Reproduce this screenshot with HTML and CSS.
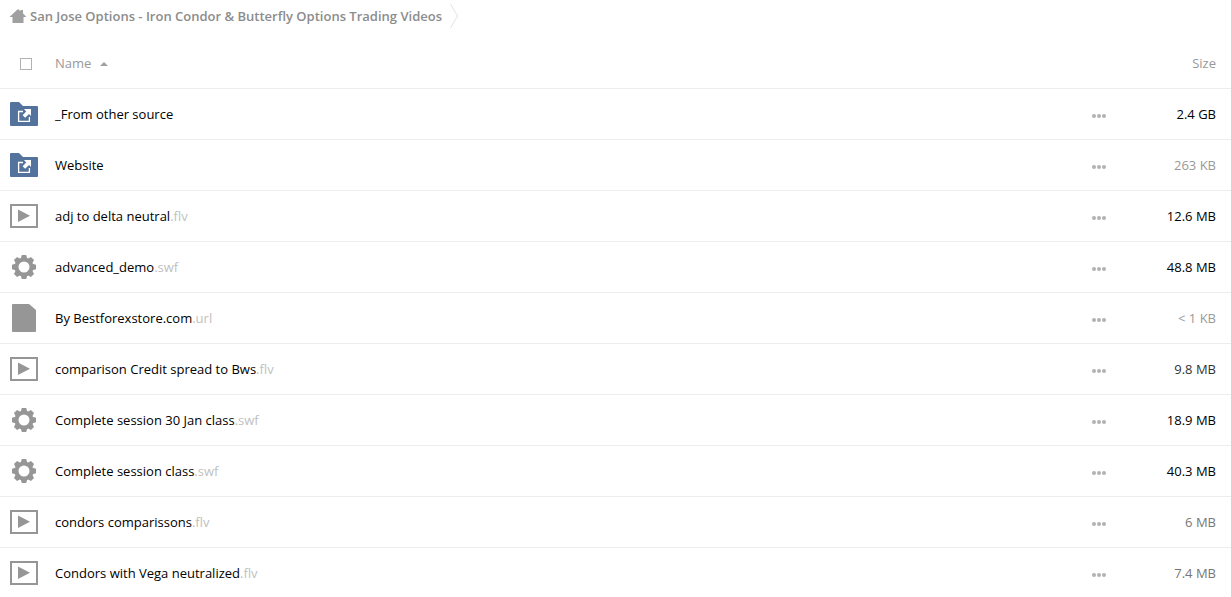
FILE: index.html
```html
<!DOCTYPE html>
<html lang="en">
<head>
  <meta charset="UTF-8">
  <meta name="viewport" content="width=device-width, initial-scale=1.0">
  <title>San Jose Options - Iron Condor &amp; Butterfly Options Trading Videos</title>
  <link rel="stylesheet" href="styles.css">
</head>
<body>
  <!-- Shared icons -->
  <svg class="sprite" aria-hidden="true">
    <symbol id="icon-folder" viewBox="0 0 28 24">
      <path fill="#54739c" d="M0 1a1 1 0 0 1 1-1h8l4 4h14a1 1 0 0 1 1 1v18a1 1 0 0 1-1 1H1a1 1 0 0 1-1-1z"/>
      <path fill="none" stroke="#fff" stroke-width="1.3" d="M13 9.500H8.600v9.900h10.800V15"/>
      <path fill="#fff" d="M14 7h7v7l-2-2-3.800 3.800-2.600-2.600 3.600-3.800z"/>
    </symbol>
    <symbol id="icon-video" viewBox="0 0 28 24">
      <rect x="1" y="1" width="26" height="22" fill="#fff" stroke="#969696" stroke-width="2"/>
      <path fill="#969696" d="M8 5.500l12 6.300-12 6.200z"/>
    </symbol>
    <symbol id="icon-gear" viewBox="-12 -12 24 24">
      <circle r="7.500" fill="none" stroke="#969696" stroke-width="4"/>
      <g fill="#969696">
        <path id="teeth" d="M-3.200-8.500L-2.200-12h4.400l1 3.500zM-3.200 8.500L-2.200 12h4.400l1-3.500zM-8.500-3.200L-12-2.200v4.400l3.500 1zM8.500-3.200L12-2.200v4.400l-3.500 1z"/>
        <use href="#teeth" transform="rotate(45)"/>
      </g>
    </symbol>
    <symbol id="icon-file" viewBox="0 0 24 28">
      <path fill="#969696" d="M1 0h16l7 6v21a1 1 0 0 1-1 1H1a1 1 0 0 1-1-1V1a1 1 0 0 1 1-1z"/>
    </symbol>
    <symbol id="icon-dots" viewBox="0 0 14 4">
      <g fill="#b2b2b2"><circle cx="2" cy="2" r="2"/><circle cx="7" cy="2" r="2"/><circle cx="12" cy="2" r="2"/></g>
    </symbol>
  </svg>

  <nav class="breadcrumbs" aria-label="Breadcrumb">
    <a class="crumb" href="#">
      <svg class="home" viewBox="0 0 16 14" aria-hidden="true">
        <path fill="#a0a0a0" d="M8 0l2.500 2.300V1H13v3.600l3 2.900V8h-2.500v6h-11V8H0v-.5z"/>
      </svg>
      San Jose Options - Iron Condor &amp; Butterfly Options Trading Videos
    </a>
    <svg class="chevron" viewBox="0 0 8 24" aria-hidden="true">
      <path fill="none" stroke="#e2e2e2" d="M.5 0l7 12-7 12"/>
    </svg>
  </nav>

  <table class="files">
    <thead>
      <tr>
        <th class="col-icon"><input class="check" type="checkbox" aria-label="Select all"></th>
        <th class="col-name">
          <button class="sort" type="button">Name
            <svg class="arrow" viewBox="0 0 8 4" aria-hidden="true"><path fill="#a0a0a0" d="M0 4l4-4 4 4z"/></svg>
          </button>
        </th>
        <th class="col-menu"></th>
        <th class="col-size"><button class="sort" type="button">Size</button></th>
      </tr>
    </thead>
    <tbody>
      <tr>
        <td class="col-icon"><svg class="icon"><use href="#icon-folder"/></svg></td>
        <td class="col-name"><a href="#">_From other source</a></td>
        <td class="col-menu"><button class="menu" type="button" aria-label="More"><svg class="dots"><use href="#icon-dots"/></svg></button></td>
        <td class="col-size">2.4 GB</td>
      </tr>
      <tr>
        <td class="col-icon"><svg class="icon"><use href="#icon-folder"/></svg></td>
        <td class="col-name"><a href="#">Website</a></td>
        <td class="col-menu"><button class="menu" type="button" aria-label="More"><svg class="dots"><use href="#icon-dots"/></svg></button></td>
        <td class="col-size size-tiny">263 KB</td>
      </tr>
      <tr>
        <td class="col-icon"><svg class="icon"><use href="#icon-video"/></svg></td>
        <td class="col-name"><a href="#">adj to delta neutral<span class="ext">.flv</span></a></td>
        <td class="col-menu"><button class="menu" type="button" aria-label="More"><svg class="dots"><use href="#icon-dots"/></svg></button></td>
        <td class="col-size">12.6 MB</td>
      </tr>
      <tr>
        <td class="col-icon"><svg class="icon"><use href="#icon-gear"/></svg></td>
        <td class="col-name"><a href="#">advanced_demo<span class="ext">.swf</span></a></td>
        <td class="col-menu"><button class="menu" type="button" aria-label="More"><svg class="dots"><use href="#icon-dots"/></svg></button></td>
        <td class="col-size">48.8 MB</td>
      </tr>
      <tr>
        <td class="col-icon"><svg class="icon icon-tall"><use href="#icon-file"/></svg></td>
        <td class="col-name"><a href="#">By Bestforexstore.com<span class="ext">.url</span></a></td>
        <td class="col-menu"><button class="menu" type="button" aria-label="More"><svg class="dots"><use href="#icon-dots"/></svg></button></td>
        <td class="col-size size-tiny">&lt; 1 KB</td>
      </tr>
      <tr>
        <td class="col-icon"><svg class="icon"><use href="#icon-video"/></svg></td>
        <td class="col-name"><a href="#">comparison Credit spread to Bws<span class="ext">.flv</span></a></td>
        <td class="col-menu"><button class="menu" type="button" aria-label="More"><svg class="dots"><use href="#icon-dots"/></svg></button></td>
        <td class="col-size size-medium">9.8 MB</td>
      </tr>
      <tr>
        <td class="col-icon"><svg class="icon"><use href="#icon-gear"/></svg></td>
        <td class="col-name"><a href="#">Complete session 30 Jan class<span class="ext">.swf</span></a></td>
        <td class="col-menu"><button class="menu" type="button" aria-label="More"><svg class="dots"><use href="#icon-dots"/></svg></button></td>
        <td class="col-size">18.9 MB</td>
      </tr>
      <tr>
        <td class="col-icon"><svg class="icon"><use href="#icon-gear"/></svg></td>
        <td class="col-name"><a href="#">Complete session class<span class="ext">.swf</span></a></td>
        <td class="col-menu"><button class="menu" type="button" aria-label="More"><svg class="dots"><use href="#icon-dots"/></svg></button></td>
        <td class="col-size">40.3 MB</td>
      </tr>
      <tr>
        <td class="col-icon"><svg class="icon"><use href="#icon-video"/></svg></td>
        <td class="col-name"><a href="#">condors comparissons<span class="ext">.flv</span></a></td>
        <td class="col-menu"><button class="menu" type="button" aria-label="More"><svg class="dots"><use href="#icon-dots"/></svg></button></td>
        <td class="col-size size-small">6 MB</td>
      </tr>
      <tr>
        <td class="col-icon"><svg class="icon"><use href="#icon-video"/></svg></td>
        <td class="col-name"><a href="#">Condors with Vega neutralized<span class="ext">.flv</span></a></td>
        <td class="col-menu"><button class="menu" type="button" aria-label="More"><svg class="dots"><use href="#icon-dots"/></svg></button></td>
        <td class="col-size size-small">7.4 MB</td>
      </tr>
    </tbody>
  </table>
</body>
</html>
```
FILE: styles.css
```css
body {
  margin: 0;
  background: #fff;
  color: #000;
  font-family: "Open Sans", "Noto Sans", sans-serif;
  font-size: 13px;
  line-height: 18px;
}
.sprite {
  display: none;
}
a {
  color: inherit;
  text-decoration: none;
}
button {
  padding: 0;
  border: none;
  background: none;
  color: inherit;
  font: inherit;
  cursor: pointer;
}

/* Breadcrumbs */
.breadcrumbs {
  display: flex;
  align-items: center;
  gap: 8px;
  height: 32px;
  padding: 0 10px 6px;
}
.crumb {
  display: flex;
  align-items: center;
  gap: 4px;
  color: #8c8c8c;
  font-weight: 600;
}
.home {
  width: 16px;
  height: 14px;
}
.chevron {
  width: 8px;
  height: 24px;
}

/* File list */
.files {
  width: 100%;
  border-spacing: 0;
}
.files th,
.files td {
  height: 50px;
  padding: 0;
  border-bottom: 1px solid #ededed;
  text-align: left;
  vertical-align: middle;
}
.files th {
  color: #999;
  font-weight: 400;
}
.files .col-icon {
  width: 45px;
  padding-left: 10px;
}
.files .col-menu {
  width: 50px;
}
.files .col-size {
  width: 74px;
  padding-right: 15px;
  text-align: right;
  white-space: nowrap;
}
.icon {
  display: block;
  width: 28px;
  height: 24px;
}
.icon-tall {
  height: 28px;
}
.check {
  display: block;
  width: 12px;
  height: 12px;
  margin: 2px 10px 0;
  border: 1px solid #b2b2b2;
  background: #fff;
  appearance: none;
}
.check:checked {
  background: #b2b2b2;
}
.sort {
  display: inline-flex;
  align-items: center;
  gap: 9px;
}
.arrow {
  width: 8px;
  height: 4px;
  margin-top: 2px;
}
.menu {
  display: block;
  padding: 10px 0 6px;
}
.dots {
  display: block;
  width: 14px;
  height: 4px;
}
.ext {
  color: #bfbfbf;
}

/* Smaller files are shown fainter */
.files .size-medium {
  color: #333;
}
.files .size-small {
  color: #777;
}
.files .size-tiny {
  color: #999;
}
```
